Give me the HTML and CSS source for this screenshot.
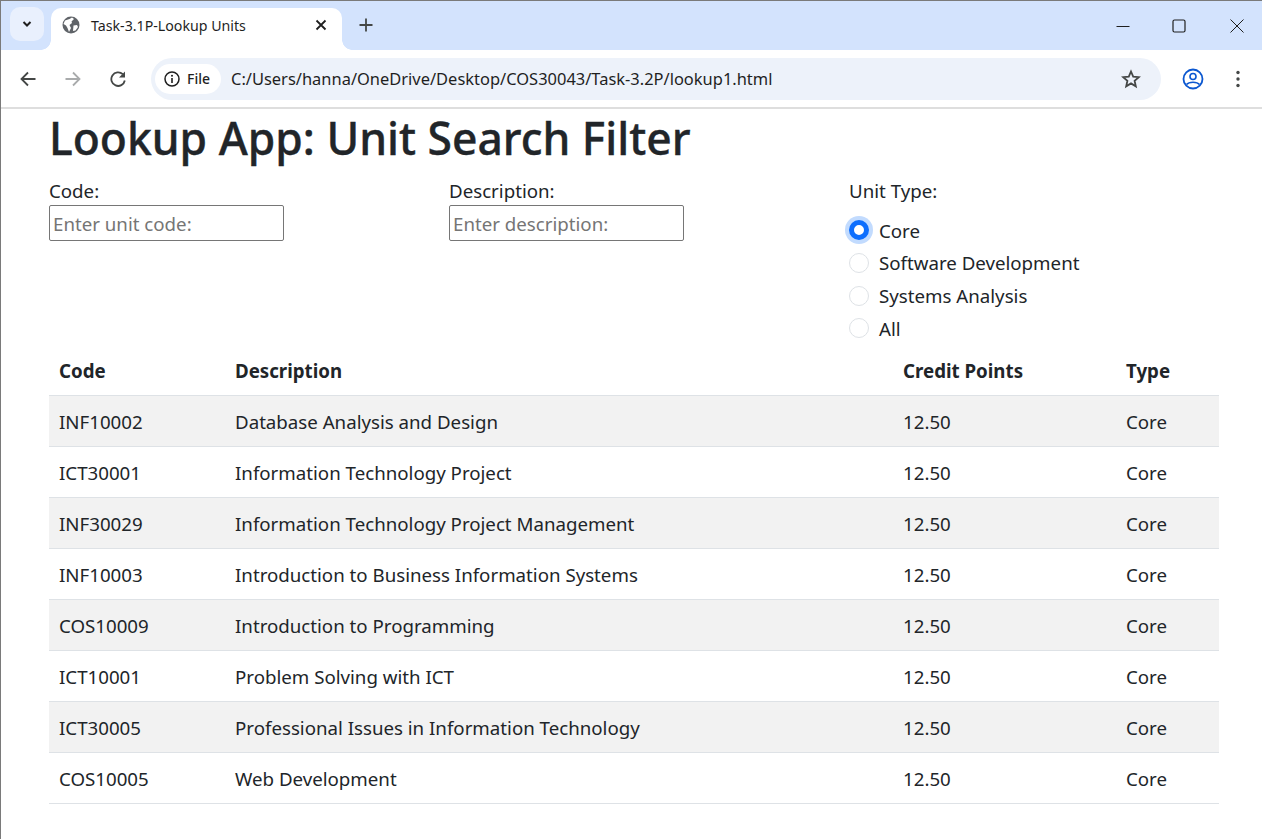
FILE: index.html
```html
<!DOCTYPE html>
<html lang="en">
<head>
    <meta charset="UTF-8">
    <meta name="viewport" content="width=device-width, initial-scale=1.0">
    <title>Task-3.1P-Lookup Units</title>
    <link rel="stylesheet" href="styles.css">
</head>
<body>

<div class="window">
    <div class="tabbar">
        <button class="tab-menu">
            <svg width="12" height="12" viewBox="0 0 12 12"><path d="M2.500 4 6 7.500 9.500 4" fill="none" stroke="#1f1f1f" stroke-width="2"/></svg>
        </button>
        <div class="tab">
            <svg class="favicon" width="18" height="18" viewBox="0 0 18 18">
                <circle cx="9" cy="9" r="8.500" fill="#5f6368"/>
                <path d="M3 4.500 7.500 3 10 1.500 12 3 9.500 5.500 10 7 7.500 9 9 12 7 16 5.500 12 4 9.500 1.500 8Z" fill="#fff"/>
                <path d="M11.500 9.500 15 9 16 11 13.500 14.500 11 15Z" fill="#fff"/>
            </svg>
            <span class="tab-title">Task-3.1P-Lookup Units</span>
            <svg class="tab-close" width="12" height="12" viewBox="0 0 12 12"><path d="M1.500 1.500 10.500 10.500M10.500 1.500 1.500 10.500" stroke="#1f1f1f" stroke-width="1.800"/></svg>
        </div>
        <svg class="new-tab" width="14" height="14" viewBox="0 0 14 14"><path d="M7 0.500V13.500M0.500 7H13.500" stroke="#444746" stroke-width="1.800"/></svg>
        <div class="win-controls">
            <svg width="14" height="14" viewBox="0 0 14 14"><path d="M0.500 7.500H13.500" stroke="#1f1f1f" stroke-width="1"/></svg>
            <svg class="win-max" width="14" height="14" viewBox="0 0 14 14"><rect x="1" y="1" width="12" height="12" rx="1.500" fill="none" stroke="#1f1f1f" stroke-width="1.200"/></svg>
            <svg width="14" height="14" viewBox="0 0 14 14"><path d="M0.500 0.500 13.500 13.500M13.500 0.500 0.500 13.500" stroke="#1f1f1f" stroke-width="1"/></svg>
        </div>
    </div>

    <div class="toolbar">
        <svg class="nav-icon" width="16" height="16" viewBox="0 0 16 16"><path d="M15.500 8H1.500M8 1.500 1.500 8 8 14.500" fill="none" stroke="#444746" stroke-width="1.800"/></svg>
        <svg class="nav-icon" width="16" height="16" viewBox="0 0 16 16"><path d="M0.500 8H14.500M8 1.500 14.500 8 8 14.500" fill="none" stroke="#a9abac" stroke-width="1.800"/></svg>
        <svg class="nav-icon" width="16" height="16" viewBox="0 0 16 16"><path d="M14.800 9.500A6.800 6.800 0 1 1 12.800 3.200" fill="none" stroke="#444746" stroke-width="1.800"/><path d="M15 0.500V6.500H9Z" fill="#444746"/></svg>
        <div class="omnibox">
            <div class="site-chip">
                <svg width="16" height="16" viewBox="0 0 16 16"><circle cx="8" cy="8" r="7" fill="none" stroke="#1f1f1f" stroke-width="1.500"/><path d="M8 7V12" stroke="#1f1f1f" stroke-width="1.600"/><circle cx="8" cy="4.800" r="1" fill="#1f1f1f"/></svg>
                <span>File</span>
            </div>
            <span class="url">C:/Users/hanna/OneDrive/Desktop/COS30043/Task-3.2P/lookup1.html</span>
            <svg class="star" width="20" height="20" viewBox="0 0 20 20"><path d="M10 2.500 12.200 7.600 17.800 8.100 13.600 11.800 14.800 17.300 10 14.400 5.200 17.300 6.400 11.800 2.200 8.100 7.800 7.600Z" fill="none" stroke="#444746" stroke-width="1.800"/></svg>
        </div>
        <svg class="profile" width="22" height="22" viewBox="0 0 22 22"><circle cx="11" cy="11" r="9.500" fill="none" stroke="#0b57d0" stroke-width="1.800"/><circle cx="11" cy="8.500" r="3" fill="none" stroke="#0b57d0" stroke-width="1.600"/><path d="M4.500 16.500C7 13.500 15 13.500 17.500 16.500" fill="none" stroke="#0b57d0" stroke-width="1.600"/></svg>
        <svg class="menu-dots" width="4" height="18" viewBox="0 0 4 18"><circle cx="2" cy="2.500" r="1.700" fill="#444746"/><circle cx="2" cy="9" r="1.700" fill="#444746"/><circle cx="2" cy="15.500" r="1.700" fill="#444746"/></svg>
    </div>

    <main class="page">
        <h1>Lookup App: Unit Search Filter</h1>
        <div class="filters">
            <div class="field">
                <label for="code">Code:</label>
                <input id="code" type="text" placeholder="Enter unit code:">
            </div>
            <div class="field">
                <label for="desc">Description:</label>
                <input id="desc" type="text" placeholder="Enter description:">
            </div>
            <div class="field">
                <div class="group-label">Unit Type:</div>
                <div class="radio"><span class="dot checked"></span>Core</div>
                <div class="radio"><span class="dot"></span>Software Development</div>
                <div class="radio"><span class="dot"></span>Systems Analysis</div>
                <div class="radio"><span class="dot"></span>All</div>
            </div>
        </div>
        <table>
            <thead>
                <tr><th class="c1">Code</th><th class="c2">Description</th><th class="c3">Credit Points</th><th>Type</th></tr>
            </thead>
            <tbody>
                <tr><td>INF10002</td><td>Database Analysis and Design</td><td>12.50</td><td>Core</td></tr>
                <tr><td>ICT30001</td><td>Information Technology Project</td><td>12.50</td><td>Core</td></tr>
                <tr><td>INF30029</td><td>Information Technology Project Management</td><td>12.50</td><td>Core</td></tr>
                <tr><td>INF10003</td><td>Introduction to Business Information Systems</td><td>12.50</td><td>Core</td></tr>
                <tr><td>COS10009</td><td>Introduction to Programming</td><td>12.50</td><td>Core</td></tr>
                <tr><td>ICT10001</td><td>Problem Solving with ICT</td><td>12.50</td><td>Core</td></tr>
                <tr><td>ICT30005</td><td>Professional Issues in Information Technology</td><td>12.50</td><td>Core</td></tr>
                <tr><td>COS10005</td><td>Web Development</td><td>12.50</td><td>Core</td></tr>
            </tbody>
        </table>
    </main>
</div>

</body>
</html>
```

FILE: styles.css
```css
* {
    box-sizing: border-box;
}
html, body {
    margin: 0;
    height: 100%;
    overflow: hidden;
}
body {
    font-family: "Noto Sans", "Open Sans", sans-serif;
    color: #212529;
    background: #fff;
}
.window {
    height: 839px;
    border-top: 1px solid #7a7a7a;
    border-left: 1px solid #7a7a7a;
}

/* browser tab strip */
.tabbar {
    height: 49px;
    background: #d3e3fd;
    display: flex;
    align-items: center;
    padding: 0 0 0 9px;
}
.tab-menu {
    width: 34px;
    height: 34px;
    margin-top: -3px;
    border: 0;
    border-radius: 10px;
    background: #e9f0fd;
    display: flex;
    align-items: center;
    justify-content: center;
    padding: 0;
}
.tab {
    position: relative;
    width: 291px;
    height: 42px;
    margin: 7px 0 0 7px;
    background: #fff;
    border-radius: 10px 10px 0 0;
    display: flex;
    align-items: center;
    padding: 0 15px 8px 11px;
}
/* the small flares where the tab meets the toolbar */
.tab::before,
.tab::after {
    content: "";
    position: absolute;
    bottom: 0;
    width: 10px;
    height: 10px;
}
.tab::before {
    left: -10px;
    background: radial-gradient(circle at 0 0, #d3e3fd 9.500px, #fff 10px);
}
.tab::after {
    right: -10px;
    background: radial-gradient(circle at 100% 0, #d3e3fd 9.500px, #fff 10px);
}
.tab-title {
    font-size: 14.200px;
    color: #1f1f1f;
    margin-left: 11px;
    flex: 1;
    white-space: nowrap;
}
.new-tab {
    margin: -1px 0 0 17px;
}
.win-controls {
    margin-left: auto;
    width: 146px;
    padding: 0 18px 0 0;
    display: flex;
    justify-content: space-between;
}
.win-max {
    margin-right: 2px;
}

/* address bar row */
.toolbar {
    height: 59px;
    background: #fff;
    border-bottom: 2px solid #dedede;
    border-radius: 8px 8px 0 0;
    display: flex;
    align-items: center;
    padding: 0 16px 0 19px;
}
.nav-icon {
    margin-right: 29px;
}
.nav-icon:nth-child(3) {
    margin-right: 25px;
}
.omnibox {
    width: 1010px;
    height: 42px;
    background: #edf2fa;
    border-radius: 21px;
    display: flex;
    align-items: center;
    padding: 0 20px 0 4px;
}
.site-chip {
    height: 30px;
    width: 66px;
    background: #fff;
    border-radius: 15px;
    display: flex;
    align-items: center;
    gap: 7px;
    padding-left: 9px;
    font-size: 14px;
    font-weight: 500;
    color: #1f1f1f;
}
.url {
    margin-left: 10px;
    font-size: 16.470px;
    color: #1f1f1f;
    flex: 1;
    white-space: nowrap;
}
.profile {
    margin-left: 21px;
}
.menu-dots {
    margin-left: 32px;
}

/* page content */
.page {
    padding: 0 42px 0 48px;
}
h1 {
    font-size: 44.400px;
    font-weight: 500;
    line-height: 48px;
    margin: 5px 0 16px;
    -webkit-text-stroke: 0.4px #212529;
}
.filters {
    display: grid;
    grid-template-columns: 400px 400px 1fr;
}
.field label,
.group-label {
    display: block;
    font-size: 18.700px;
    line-height: 26px;
    padding-bottom: 1px;
}
.group-label {
    margin-bottom: 9px;
}
.field input {
    display: block;
    width: 235px;
    height: 36px;
    font-family: inherit;
    font-size: 18.700px;
    padding: 0 3px;
    border: 1px solid #767676;
    border-radius: 2px;
    outline: 0;
}
.field input::placeholder {
    color: #757575;
}
.radio {
    display: flex;
    align-items: center;
    gap: 10px;
    height: 32.670px;
    font-size: 18.700px;
}
.dot {
    width: 20px;
    height: 20px;
    border-radius: 50%;
    border: 1px solid #dee2e6;
    background: #fff;
}
.dot.checked {
    border: 5px solid #0d6efd;
    box-shadow: 0 0 0 4px #c2dbfe;
}
table {
    width: 1170px;
    border-collapse: collapse;
    table-layout: fixed;
    font-size: 18.700px;
}
th, td {
    text-align: left;
    font-weight: 400;
    line-height: 27px;
    padding: 12px 10px 11px;
    border-bottom: 1px solid #dee2e6;
}
th {
    font-weight: 700;
}
.c1 { width: 176px; }
.c2 { width: 668px; }
.c3 { width: 223px; }
tbody tr:nth-child(odd) td {
    background: #f2f2f2;
}
```
